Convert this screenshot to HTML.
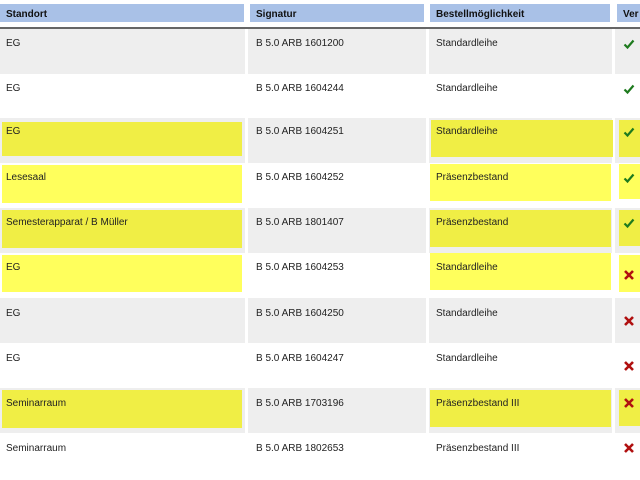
<!DOCTYPE html>
<html><head><meta charset="utf-8"><style>
body{margin:0;width:640px;height:480px;overflow:hidden;background:#fff;font-family:"Liberation Sans",sans-serif;font-size:10px;color:#222;position:relative}
div{position:absolute;box-sizing:border-box}
.h{top:4px;height:18px;background:#a9c1e7;font-weight:bold;padding:5px 0 0 6px;color:#111}
.r{left:0;width:640px;height:45px}
.g{background:#eeeeee}
.v{background:#fff;width:3px;height:45px;top:0}
.t{padding-left:6px}
.y1{background:#f0ee45}.y2{background:#ffff5c}
.ic{left:623px;width:12px;height:12px}
</style></head><body>
<div class="h" style="left:0;width:244px">Standort</div>
<div class="h" style="left:250px;width:174px">Signatur</div>
<div class="h" style="left:430px;width:180px">Bestellmöglichkeit</div>
<div class="h" style="left:617px;width:30px">Ver</div>
<div style="left:0;top:27px;width:640px;height:2px;background:#666"></div>

<div class="r g" style="top:29px"><div class="v" style="left:245px"></div><div class="v" style="left:426px"></div><div class="v" style="left:612px"></div></div>
<div class="r g" style="top:118px"><div class="v" style="left:245px"></div><div class="v" style="left:426px"></div><div class="v" style="left:612px"></div></div>
<div class="r g" style="top:208px"><div class="v" style="left:245px"></div><div class="v" style="left:426px"></div><div class="v" style="left:612px"></div></div>
<div class="r g" style="top:298px"><div class="v" style="left:245px"></div><div class="v" style="left:426px"></div><div class="v" style="left:612px"></div></div>
<div class="r g" style="top:388px"><div class="v" style="left:245px"></div><div class="v" style="left:426px"></div><div class="v" style="left:612px"></div></div>

<div class="y1" style="left:2px;top:122px;width:240px;height:34px"></div>
<div class="y1" style="left:431px;top:120px;width:182px;height:37px"></div>
<div class="y1" style="left:619px;top:120px;width:21px;height:37px"></div>
<div class="y2" style="left:2px;top:165px;width:240px;height:38px"></div>
<div class="y2" style="left:430px;top:164px;width:181px;height:37px"></div>
<div class="y2" style="left:619px;top:164px;width:21px;height:35px"></div>
<div class="y1" style="left:2px;top:210px;width:240px;height:38px"></div>
<div class="y1" style="left:430px;top:210px;width:181px;height:37px"></div>
<div class="y1" style="left:619px;top:210px;width:21px;height:36px"></div>
<div class="y2" style="left:2px;top:255px;width:240px;height:37px"></div>
<div class="y2" style="left:430px;top:253px;width:181px;height:37px"></div>
<div class="y2" style="left:619px;top:255px;width:21px;height:37px"></div>
<div class="y1" style="left:2px;top:390px;width:240px;height:38px"></div>
<div class="y1" style="left:430px;top:390px;width:181px;height:37px"></div>
<div class="y1" style="left:619px;top:390px;width:21px;height:36px"></div>

<div class="t" style="left:0;top:38px">EG</div><div class="t" style="left:250px;top:38px">B 5.0 ARB 1601200</div><div class="t" style="left:430px;top:38px">Standardleihe</div>
<div class="t" style="left:0;top:83px">EG</div><div class="t" style="left:250px;top:83px">B 5.0 ARB 1604244</div><div class="t" style="left:430px;top:83px">Standardleihe</div>
<div class="t" style="left:0;top:126px">EG</div><div class="t" style="left:250px;top:126px">B 5.0 ARB 1604251</div><div class="t" style="left:430px;top:126px">Standardleihe</div>
<div class="t" style="left:0;top:172px">Lesesaal</div><div class="t" style="left:250px;top:172px">B 5.0 ARB 1604252</div><div class="t" style="left:430px;top:172px">Präsenzbestand</div>
<div class="t" style="left:0;top:217px">Semesterapparat / B Müller</div><div class="t" style="left:250px;top:217px">B 5.0 ARB 1801407</div><div class="t" style="left:430px;top:217px">Präsenzbestand</div>
<div class="t" style="left:0;top:262px">EG</div><div class="t" style="left:250px;top:262px">B 5.0 ARB 1604253</div><div class="t" style="left:430px;top:262px">Standardleihe</div>
<div class="t" style="left:0;top:308px">EG</div><div class="t" style="left:250px;top:308px">B 5.0 ARB 1604250</div><div class="t" style="left:430px;top:308px">Standardleihe</div>
<div class="t" style="left:0;top:353px">EG</div><div class="t" style="left:250px;top:353px">B 5.0 ARB 1604247</div><div class="t" style="left:430px;top:353px">Standardleihe</div>
<div class="t" style="left:0;top:398px">Seminarraum</div><div class="t" style="left:250px;top:398px">B 5.0 ARB 1703196</div><div class="t" style="left:430px;top:398px">Präsenzbestand III</div>
<div class="t" style="left:0;top:443px">Seminarraum</div><div class="t" style="left:250px;top:443px">B 5.0 ARB 1802653</div><div class="t" style="left:430px;top:443px">Präsenzbestand III</div>

<svg class="ic" style="position:absolute;top:38px" viewBox="0 0 12 12"><path d="M1.5 6.5L4.5 9.5L10.5 2.5" fill="none" stroke="#1e7a1e" stroke-width="2.2"/></svg>
<svg class="ic" style="position:absolute;top:83px" viewBox="0 0 12 12"><path d="M1.5 6.5L4.5 9.5L10.5 2.5" fill="none" stroke="#1e7a1e" stroke-width="2.2"/></svg>
<svg class="ic" style="position:absolute;top:126px" viewBox="0 0 12 12"><path d="M1.5 6.5L4.5 9.5L10.5 2.5" fill="none" stroke="#1e7a1e" stroke-width="2.2"/></svg>
<svg class="ic" style="position:absolute;top:172px" viewBox="0 0 12 12"><path d="M1.5 6.5L4.5 9.5L10.5 2.5" fill="none" stroke="#1e7a1e" stroke-width="2.2"/></svg>
<svg class="ic" style="position:absolute;top:217px" viewBox="0 0 12 12"><path d="M1.5 6.5L4.5 9.5L10.5 2.5" fill="none" stroke="#1e7a1e" stroke-width="2.2"/></svg>
<svg class="ic" style="position:absolute;top:269px" viewBox="0 0 12 12"><path d="M2 2L10 10M10 2L2 10" stroke="#b01010" stroke-width="2.6"/></svg>
<svg class="ic" style="position:absolute;top:315px" viewBox="0 0 12 12"><path d="M2 2L10 10M10 2L2 10" stroke="#b01010" stroke-width="2.6"/></svg>
<svg class="ic" style="position:absolute;top:360px" viewBox="0 0 12 12"><path d="M2 2L10 10M10 2L2 10" stroke="#b01010" stroke-width="2.6"/></svg>
<svg class="ic" style="position:absolute;top:397px" viewBox="0 0 12 12"><path d="M2 2L10 10M10 2L2 10" stroke="#b01010" stroke-width="2.6"/></svg>
<svg class="ic" style="position:absolute;top:442px" viewBox="0 0 12 12"><path d="M2 2L10 10M10 2L2 10" stroke="#b01010" stroke-width="2.6"/></svg>
</body></html>
